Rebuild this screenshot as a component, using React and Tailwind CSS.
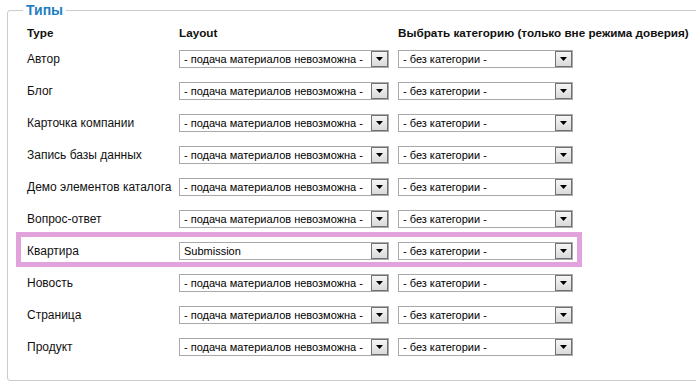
import React from 'react';

const NO_SUBMIT = '- подача материалов невозможна -';
const NO_CAT = '- без категории -';

const rows = [
  { type: 'Автор', layout: NO_SUBMIT },
  { type: 'Блог', layout: NO_SUBMIT },
  { type: 'Карточка компании', layout: NO_SUBMIT },
  { type: 'Запись базы данных', layout: NO_SUBMIT },
  { type: 'Демо элементов каталога', layout: NO_SUBMIT },
  { type: 'Вопрос-ответ', layout: NO_SUBMIT },
  { type: 'Квартира', layout: 'Submission', active: true },
  { type: 'Новость', layout: NO_SUBMIT },
  { type: 'Страница', layout: NO_SUBMIT },
  { type: 'Продукт', layout: NO_SUBMIT },
];

function FakeSelect({ value, width }) {
  return (
    <div className={`flex items-center h-[18px] border border-[#a9a9a9] bg-white ${width}`}>
      <span className="flex-1 pl-[4px] text-[11px] leading-none text-black whitespace-nowrap overflow-hidden">{value}</span>
      <span className="flex items-center justify-center w-[17px] h-[16px] border border-[#707070] bg-gradient-to-b from-[#f6f6f6] to-[#dadada]">
        <svg width="7" height="4" viewBox="0 0 7 4">
          <path d="M0 0H7L3.5 4Z" fill="#000" />
        </svg>
      </span>
    </div>
  );
}

export default function App() {
  return (
    <div className="w-[696px] h-[389px] bg-white overflow-hidden font-['Liberation_Sans',Arial,sans-serif] text-[12px] text-[#111]">
      <fieldset className="ml-[7px] mt-[2px] w-[720px] border border-[#cccccc] rounded-[3px] pl-[19px] pt-[5px] pb-[17px]">
        <legend className="ml-[-4px] px-[3px] text-[14px] leading-[16px] font-bold text-[#1f7fc3]">Типы</legend>

        <div className="flex items-center h-[20px] font-bold text-[11.7px]">
          <div className="w-[152px]">Type</div>
          <div className="w-[219px]">Layout</div>
          <div>Выбрать категорию (только вне режима доверия)</div>
        </div>

        {rows.map((r) => (
          <div key={r.type} className="relative flex items-center h-[32px]">
            {r.active && (
              <span className="absolute left-[-11px] w-[566px] top-[-3px] h-[35px] border-[5px] border-[#e2a3dd]" />
            )}
            <div className="w-[152px]">{r.type}</div>
            <div className="w-[219px]">
              <FakeSelect value={r.layout} width="w-[210px]" />
            </div>
            <FakeSelect value={NO_CAT} width="w-[175px]" />
          </div>
        ))}
      </fieldset>
    </div>
  );
}
